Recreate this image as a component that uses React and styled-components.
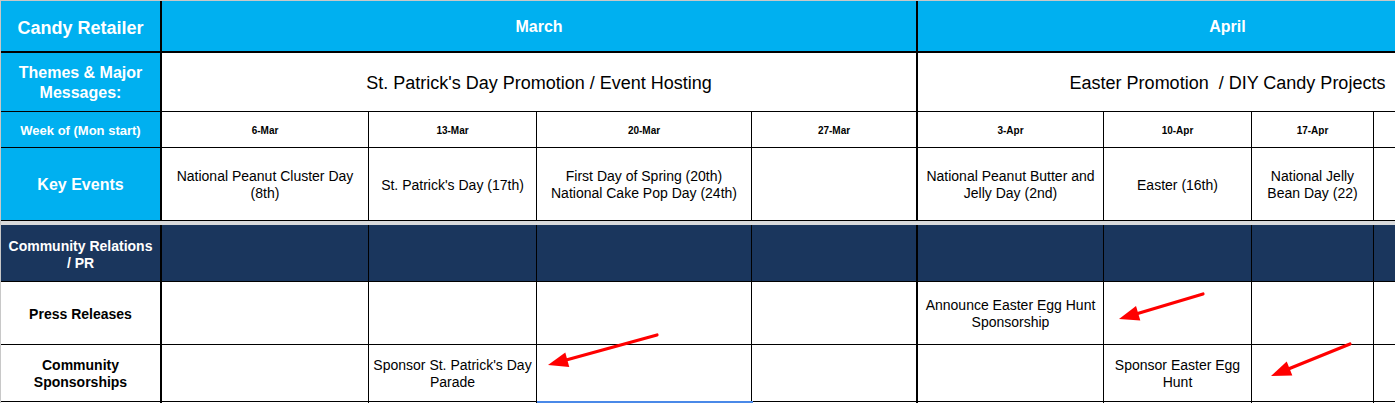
import React from "react";
import styled, { createGlobalStyle } from "styled-components";

const GlobalStyle = createGlobalStyle`
  html, body { margin: 0; padding: 0; background: #fff; overflow: hidden; }
  body { font-family: "Liberation Sans", Arial, sans-serif; }
`;

const BLUE = "#00b0f0";
const NAVY = "#1a365d";

const Sheet = styled.div`
  position: relative;
  width: 1395px;
  height: 403px;
  overflow: hidden;
  box-sizing: border-box;
  border-top: 1px solid #c8c8c8;
  border-left: 1px solid #c8c8c8;
`;

const Grid = styled.div`
  display: grid;
  grid-template-columns: 161px 207px 168px 215px 166px 186px 148px 122px 164px;
  grid-template-rows: 52px 59px 36px 73px 4px 57px 63px 57px 40px;
  width: max-content;
`;

const Cell = styled.div`
  box-sizing: border-box;
  grid-column: ${(p) => (p.$span ? `span ${p.$span}` : "auto")};
  background: ${(p) => p.$bg || "#fff"};
  border-right: ${(p) => (p.$rb ?? 1)}px solid #000;
  border-bottom: ${(p) => (p.$bb ?? 1)}px solid #000;
  display: flex;
  align-items: center;
  justify-content: center;
  text-align: center;
  color: #000;
  padding: ${(p) => p.$pt ?? 2}px 2px 0;
  overflow: visible;
  white-space: nowrap;
`;

const HeadLabel = styled(Cell)`
  color: #fff;
  font-weight: bold;
  font-size: ${(p) => p.$size || 16}px;
  line-height: ${(p) => p.$lh || 20}px;
`;

const MonthCell = styled(Cell)`
  color: #fff;
  font-weight: bold;
  font-size: 16px;
  background: ${BLUE};
`;

const ThemeCell = styled(Cell)`
  font-size: 18px;
  padding-top: 3px;
`;

const WeekCell = styled(Cell)`
  font-weight: bold;
  font-size: 10px;
`;

const TextCell = styled(Cell)`
  font-size: 14px;
  line-height: 17px;
`;

const RowLabel = styled(Cell)`
  font-weight: bold;
  font-size: 14px;
  line-height: 17px;
  color: ${(p) => (p.$dark ? "#fff" : "#000")};
`;

const Separator = styled.div`
  grid-column: 1 / -1;
  background: #d9dadc;
`;

const Overlay = styled.svg`
  position: absolute;
  left: 0;
  top: 0;
  pointer-events: none;
`;

const Selection = styled.div`
  position: absolute;
  left: 536px;
  top: 400px;
  width: 216px;
  height: 2px;
  background: #4a89e8;
`;

const weeks = [
  { label: "6-Mar", event: ["National Peanut Cluster Day", "(8th)"], press: null, comm: null },
  { label: "13-Mar", event: ["St. Patrick's Day (17th)"], press: null, comm: ["Sponsor St. Patrick's Day", "Parade"] },
  { label: "20-Mar", event: ["First Day of Spring (20th)", "National Cake Pop Day (24th)"], press: null, comm: null },
  { label: "27-Mar", event: null, press: null, comm: null, thick: true },
  { label: "3-Apr", event: ["National Peanut Butter and", "Jelly Day (2nd)"], press: ["Announce Easter Egg Hunt", "Sponsorship"], comm: null },
  { label: "10-Apr", event: ["Easter (16th)"], press: null, comm: ["Sponsor Easter Egg", "Hunt"] },
  { label: "17-Apr", event: ["National Jelly", "Bean Day (22)"], press: null, comm: null },
  { label: "", event: null, press: null, comm: null },
];

const Lines = ({ lines }) =>
  lines ? (
    <div>
      {lines.map((l, i) => (
        <div key={i}>{l}</div>
      ))}
    </div>
  ) : null;

function Arrow({ x1, y1, x2, y2 }) {
  const dx = x2 - x1;
  const dy = y2 - y1;
  const len = Math.hypot(dx, dy);
  const ux = dx / len;
  const uy = dy / len;
  const hl = 20;
  const hw = 7.5;
  const bx = x2 - ux * hl;
  const by = y2 - uy * hl;
  const px = -uy;
  const py = ux;
  const pts = `${x2},${y2} ${bx + px * hw},${by + py * hw} ${bx - px * hw},${by - py * hw}`;
  return (
    <g>
      <line x1={x1} y1={y1} x2={bx + ux * 4} y2={by + uy * 4} stroke="#ff0000" strokeWidth="3.2" strokeLinecap="round" />
      <polygon points={pts} fill="#ff0000" />
    </g>
  );
}

export default function App() {
  return (
    <>
      <GlobalStyle />
      <Sheet>
        <Grid>
          {/* Row 1: months */}
          <HeadLabel $bg={BLUE} $rb={2} $bb={2} $size={18} $pt={4}>Candy Retailer</HeadLabel>
          <MonthCell $span={4} $rb={2} $bb={2}>March</MonthCell>
          <MonthCell $span={4} $bb={2}>April</MonthCell>

          {/* Row 2: themes */}
          <HeadLabel $bg={BLUE} $rb={2} $size={16} $lh={20}>
            <div>
              <div>Themes &amp; Major</div>
              <div>Messages:</div>
            </div>
          </HeadLabel>
          <ThemeCell $span={4} $rb={2}>St. Patrick's Day Promotion / Event Hosting</ThemeCell>
          <ThemeCell $span={4}>Easter Promotion&nbsp; / DIY Candy Projects</ThemeCell>

          {/* Row 3: weeks */}
          <HeadLabel $bg={BLUE} $rb={2} $size={13}>Week of (Mon start)</HeadLabel>
          {weeks.map((w, i) => (
            <WeekCell key={i} $rb={w.thick ? 2 : 1}>{w.label}</WeekCell>
          ))}

          {/* Row 4: key events */}
          <HeadLabel $bg={BLUE} $rb={2} $size={16}>Key Events</HeadLabel>
          {weeks.map((w, i) => (
            <TextCell key={i} $rb={w.thick ? 2 : 1}>
              <Lines lines={w.event} />
            </TextCell>
          ))}

          <Separator />

          {/* Section header */}
          <RowLabel $bg={NAVY} $rb={2} $dark $pt={4}>
            <div>
              <div>Community Relations</div>
              <div>/ PR</div>
            </div>
          </RowLabel>
          {weeks.map((w, i) => (
            <Cell key={i} $bg={NAVY} $rb={w.thick ? 2 : 1} />
          ))}

          {/* Press releases */}
          <RowLabel $rb={2}>Press Releases</RowLabel>
          {weeks.map((w, i) => (
            <TextCell key={i} $rb={w.thick ? 2 : 1}>
              <Lines lines={w.press} />
            </TextCell>
          ))}

          {/* Community sponsorships */}
          <RowLabel $rb={2}>
            <div>
              <div>Community</div>
              <div>Sponsorships</div>
            </div>
          </RowLabel>
          {weeks.map((w, i) => (
            <TextCell key={i} $rb={w.thick ? 2 : 1}>
              <Lines lines={w.comm} />
            </TextCell>
          ))}

          {/* Next (cut off) row */}
          <Cell $rb={2} />
          {weeks.map((w, i) => (
            <Cell key={i} $rb={w.thick ? 2 : 1} />
          ))}
        </Grid>

        <Selection />
        <Overlay width="1395" height="403" viewBox="0 0 1395 403">
          <Arrow x1={656} y1={334} x2={547} y2={364} />
          <Arrow x1={1202} y1={293} x2={1118} y2={318} />
          <Arrow x1={1349} y1={343} x2={1270} y2={375} />
        </Overlay>
      </Sheet>
    </>
  );
}
